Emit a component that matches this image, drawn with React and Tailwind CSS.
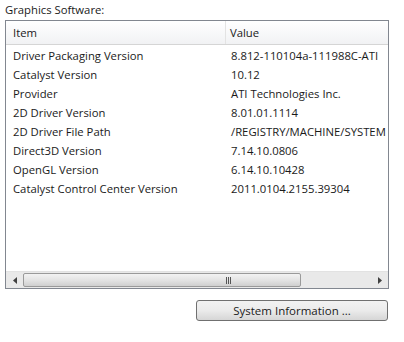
export default function App() {
  const rows = [
    ['Driver Packaging Version', '8.812-110104a-111988C-ATI'],
    ['Catalyst Version', '10.12'],
    ['Provider', 'ATI Technologies Inc.'],
    ['2D Driver Version', '8.01.01.1114'],
    ['2D Driver File Path', '/REGISTRY/MACHINE/SYSTEM'],
    ['Direct3D Version', '7.14.10.0806'],
    ['OpenGL Version', '6.14.10.10428'],
    ['Catalyst Control Center Version', '2011.0104.2155.39304'],
  ];

  return (
    <div className="w-[404px] h-[342px] bg-white text-[11.3px] text-[#1a1a1a] overflow-hidden" style={{ fontFamily: '"Segoe UI", "Open Sans", sans-serif' }}>
      <div className="pl-[5px] pt-[2px] h-[20px] leading-[16px]">Graphics Software:</div>

      <div className="ml-[5px] w-[384px] h-[269px] border border-[#828790] flex flex-col">
        <div className="flex-1 overflow-hidden">
          <div className="flex h-[24px] bg-gradient-to-b from-white to-[#f1f2f4] border-b border-[#d5d5d5]">
            <div className="w-[220px] pl-[7px] leading-[23px] border-r border-[#e3e3e3]">Item</div>
            <div className="pl-[4px] leading-[23px]">Value</div>
          </div>
          <div className="pt-[1px]">
            {rows.map(([k, v]) => (
              <div key={k} className="flex h-[19px] leading-[19px] whitespace-nowrap">
                <div className="w-[220px] shrink-0 pl-[7px]">{k}</div>
                <div className="pl-[5px]">{v}</div>
              </div>
            ))}
          </div>
        </div>

        <div className="h-[17px] flex bg-[#e9e9e9] border-t border-[#e2e2e2]">
          <div className="w-[17px] flex items-center justify-center">
            <svg width="4" height="7" viewBox="0 0 4 7"><path d="M4 0 L0 3.5 L4 7 Z" fill="#404040" /></svg>
          </div>
          <div className="flex-1 flex py-[1px]">
            <div className="w-[278px] rounded-[2px] border border-[#9a9a9a] bg-gradient-to-b from-[#f3f3f3] via-[#e4e4e4] to-[#cfcfcf] flex items-center justify-center">
              <div className="flex gap-[1px] ml-[132px]">
                <div className="w-[1px] h-[7px] bg-[#555]" />
                <div className="w-[1px] h-[7px] bg-[#555]" />
                <div className="w-[1px] h-[7px] bg-[#555]" />
              </div>
            </div>
          </div>
          <div className="w-[17px] flex items-center justify-center">
            <svg width="4" height="7" viewBox="0 0 4 7"><path d="M0 0 L4 3.5 L0 7 Z" fill="#404040" /></svg>
          </div>
        </div>
      </div>

      <div className="flex justify-end pr-[16px] pt-[11px]">
        <button className="w-[192px] h-[21px] rounded-[3px] border border-[#707070] bg-gradient-to-b from-[#f2f2f2] via-[#ebebeb] to-[#d6d6d6] text-[11.5px] leading-[19px]">
          System Information ...
        </button>
      </div>
    </div>
  );
}
